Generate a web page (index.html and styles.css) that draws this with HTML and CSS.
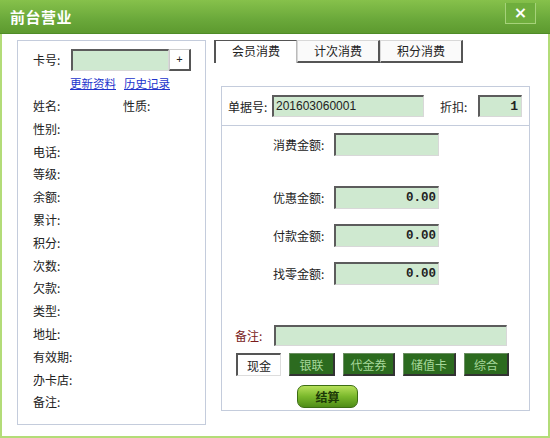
FILE: index.html
```html
<!DOCTYPE html>
<html lang="zh">
<head>
<meta charset="utf-8">
<link rel="stylesheet" href="styles.css">
</head>
<body>
<div class="win">
  <div class="title">
    <h1>前台营业</h1>
    <div class="close">×</div>
  </div>
  <div class="frame">
    <div class="left">
      <div class="card-row">
        <span class="lbl">卡号:</span>
        <span class="inp card-inp"></span>
        <span class="plus">+</span>
      </div>
      <div class="links"><a href="#">更新资料</a><a href="#">历史记录</a></div>
      <div class="info">
        <div class="row two"><span>姓名:</span><span>性质:</span></div>
        <div class="row">性别:</div>
        <div class="row">电话:</div>
        <div class="row">等级:</div>
        <div class="row">余额:</div>
        <div class="row">累计:</div>
        <div class="row">积分:</div>
        <div class="row">次数:</div>
        <div class="row">欠款:</div>
        <div class="row">类型:</div>
        <div class="row">地址:</div>
        <div class="row">有效期:</div>
        <div class="row">办卡店:</div>
        <div class="row">备注:</div>
      </div>
    </div>
    <div class="right">
      <div class="tabs">
        <div class="tab active">会员消费</div>
        <div class="tab">计次消费</div>
        <div class="tab">积分消费</div>
      </div>
      <div class="panel">
        <div class="head">
          <span class="hl">单据号:</span>
          <span class="inp bill">201603060001</span>
          <span class="hl disc-l">折扣:</span>
          <span class="inp disc">1</span>
        </div>
        <div class="body">
          <div class="amt first"><span class="al">消费金额:</span><span class="inp num"></span></div>
          <div class="amt gap1"><span class="al">优惠金额:</span><span class="inp num">0.00</span></div>
          <div class="amt"><span class="al">付款金额:</span><span class="inp num">0.00</span></div>
          <div class="amt"><span class="al">找零金额:</span><span class="inp num">0.00</span></div>
          <div class="note"><span class="nl">备注:</span><span class="inp note-inp"></span></div>
          <div class="pays">
            <span class="pay cash">现金</span>
            <span class="pay g w46">银联</span>
            <span class="pay g w52">代金券</span>
            <span class="pay g w53">储值卡</span>
            <span class="pay g w45">综合</span>
          </div>
          <div class="settle-row"><span class="settle">结算</span></div>
        </div>
      </div>
    </div>
  </div>
</div>
</body>
</html>
```
FILE: styles.css
```css
* { box-sizing: border-box; }
body {
  margin: 0;
  font-family: "Noto Sans CJK SC", "Liberation Sans", sans-serif;
  font-size: 12px;
  color: #222;
  background: #fff;
}
.win {
  width: 550px;
  height: 438px;
  display: flex;
  flex-direction: column;
  background: #fff;
}
.title {
  height: 34px;
  background: linear-gradient(#86c14b, #6aa83a 60%, #5d9a2f);
  border-bottom: 1px solid #4f8c27;
  display: flex;
  justify-content: space-between;
  align-items: flex-start;
  padding: 0 14px 0 10px;
}
.title h1 {
  margin: 0;
  line-height: 33px;
  font-size: 15px;
  font-weight: bold;
  color: #fff;
  letter-spacing: 0.5px;
}
.close {
  margin-top: 3px;
  width: 31px;
  height: 21px;
  border: 1px solid #a6d27a;
  border-top: none;
  background: #6fae3d;
  color: #fff;
  font-family: "DejaVu Sans", sans-serif;
  font-size: 16px;
  font-weight: bold;
  line-height: 19px;
  text-align: center;
}
.frame {
  flex: 1;
  border: 2px solid #b3dc78;
  border-top: none;
  display: flex;
  align-items: flex-start;
  padding: 6px 0 0 15px;
}
.left {
  width: 189px;
  height: 385px;
  border: 1px solid #c4ccdc;
  padding: 7px 0 0 15px;
}
.card-row {
  display: flex;
  align-items: center;
  height: 23px;
}
.lbl { width: 38px; }
.inp {
  display: inline-block;
  background: #cfe9d0;
  border-top: 2px solid #5c5c5c;
  border-left: 2px solid #5c5c5c;
  border-right: 1px solid #d8d8d8;
  border-bottom: 1px solid #d8d8d8;
}
.card-inp { width: 98px; height: 22px; }
.plus {
  width: 22px;
  height: 22px;
  border: 1px solid #ccc;
  border-right: 2px solid #555;
  border-bottom: 2px solid #555;
  background: #fff;
  font-size: 11px;
  line-height: 19px;
  text-align: center;
  font-family: "Liberation Sans", sans-serif;
}
.links {
  height: 17px;
  margin-top: 4px;
  padding-left: 37px;
  display: flex;
  gap: 8px;
  font-size: 11.5px;
  line-height: 17px;
}
.links a { color: #2233cc; text-decoration: underline; }
.info { margin-top: 3px; }
.row {
  height: 22.8px;
  line-height: 22.8px;
  display: flex;
}
.row.two span:first-child { width: 90px; }
.right {
  margin-left: 8px;
  display: flex;
  flex-direction: column;
}
.tabs {
  display: flex;
  height: 23px;
}
.tab {
  width: 83px;
  height: 23px;
  text-align: center;
  line-height: 20px;
  background: #fafafa;
  border-top: 1px solid #d8d8d8;
  border-right: 2px solid #555;
  border-bottom: 2px solid #555;
  border-left: 1px solid #d8d8d8;
}
.tab.active {
  background: #fff;
  border-top: 1px solid #555;
  border-left: 2px solid #555;
  border-right: 1px solid #bbb;
  border-bottom: none;
}
.panel {
  margin: 23px 0 0 7px;
  width: 309px;
  height: 325px;
  border: 1px solid #c4ccdc;
  display: flex;
  flex-direction: column;
}
.head {
  height: 39px;
  border-bottom: 1px solid #c4ccdc;
  display: flex;
  align-items: center;
  padding-left: 6px;
}
.hl { width: 44px; }
.bill {
  width: 152px;
  height: 22px;
  font-family: "Liberation Sans", sans-serif;
  font-size: 12px;
  line-height: 19px;
  padding-left: 2px;
}
.disc-l { margin-left: 16px; width: 38px; }
.disc {
  width: 44px;
  height: 22px;
  text-align: right;
  padding-right: 3px;
  font-family: "Liberation Mono", monospace;
  font-weight: bold;
  font-size: 13px;
  line-height: 19px;
}
.body {
  display: flex;
  flex-direction: column;
}
.amt {
  display: flex;
  align-items: center;
  margin: 15px 0 0 51px;
}
.amt.first { margin-top: 7px; }
.amt.gap1 { margin-top: 30px; }
.al { width: 61px; }
.num {
  width: 105px;
  height: 23px;
  text-align: right;
  padding-right: 2px;
  font-family: "Liberation Mono", monospace;
  font-weight: bold;
  font-size: 12.5px;
  line-height: 20px;
}
.note {
  display: flex;
  align-items: center;
  margin: 40px 0 0 13px;
}
.nl { width: 39px; color: #7a1c1c; }
.note-inp { width: 233px; height: 21px; }
.pays {
  display: flex;
  margin: 7px 0 0 14px;
  height: 24px;
}
.pay {
  height: 23px;
  text-align: center;
  line-height: 21px;
  margin-right: 8px;
}
.cash {
  width: 45px;
  background: #fff;
  border-top: 2px solid #555;
  border-left: 2px solid #555;
  border-right: 1px solid #ddd;
  border-bottom: 1px solid #ddd;
  margin-right: 8px;
}
.g {
  background: #2c6b1f;
  color: #a6d89a;
  border-top: 1px solid #6a8f60;
  border-left: 1px solid #6a8f60;
  border-right: 2px solid #333;
  border-bottom: 2px solid #333;
}
.w46 { width: 46px; }
.w52 { width: 52px; }
.w53 { width: 53px; }
.w45 { width: 45px; }
.settle-row {
  margin: 8px 0 0 75px;
}
.settle {
  display: inline-block;
  width: 61px;
  height: 23px;
  border-radius: 7px;
  background: linear-gradient(#b6e05a, #7ab82c 50%, #4f8d17);
  border: 1px solid #3d6e14;
  color: #1d3a08;
  font-weight: bold;
  text-align: center;
  line-height: 21px;
}
```
